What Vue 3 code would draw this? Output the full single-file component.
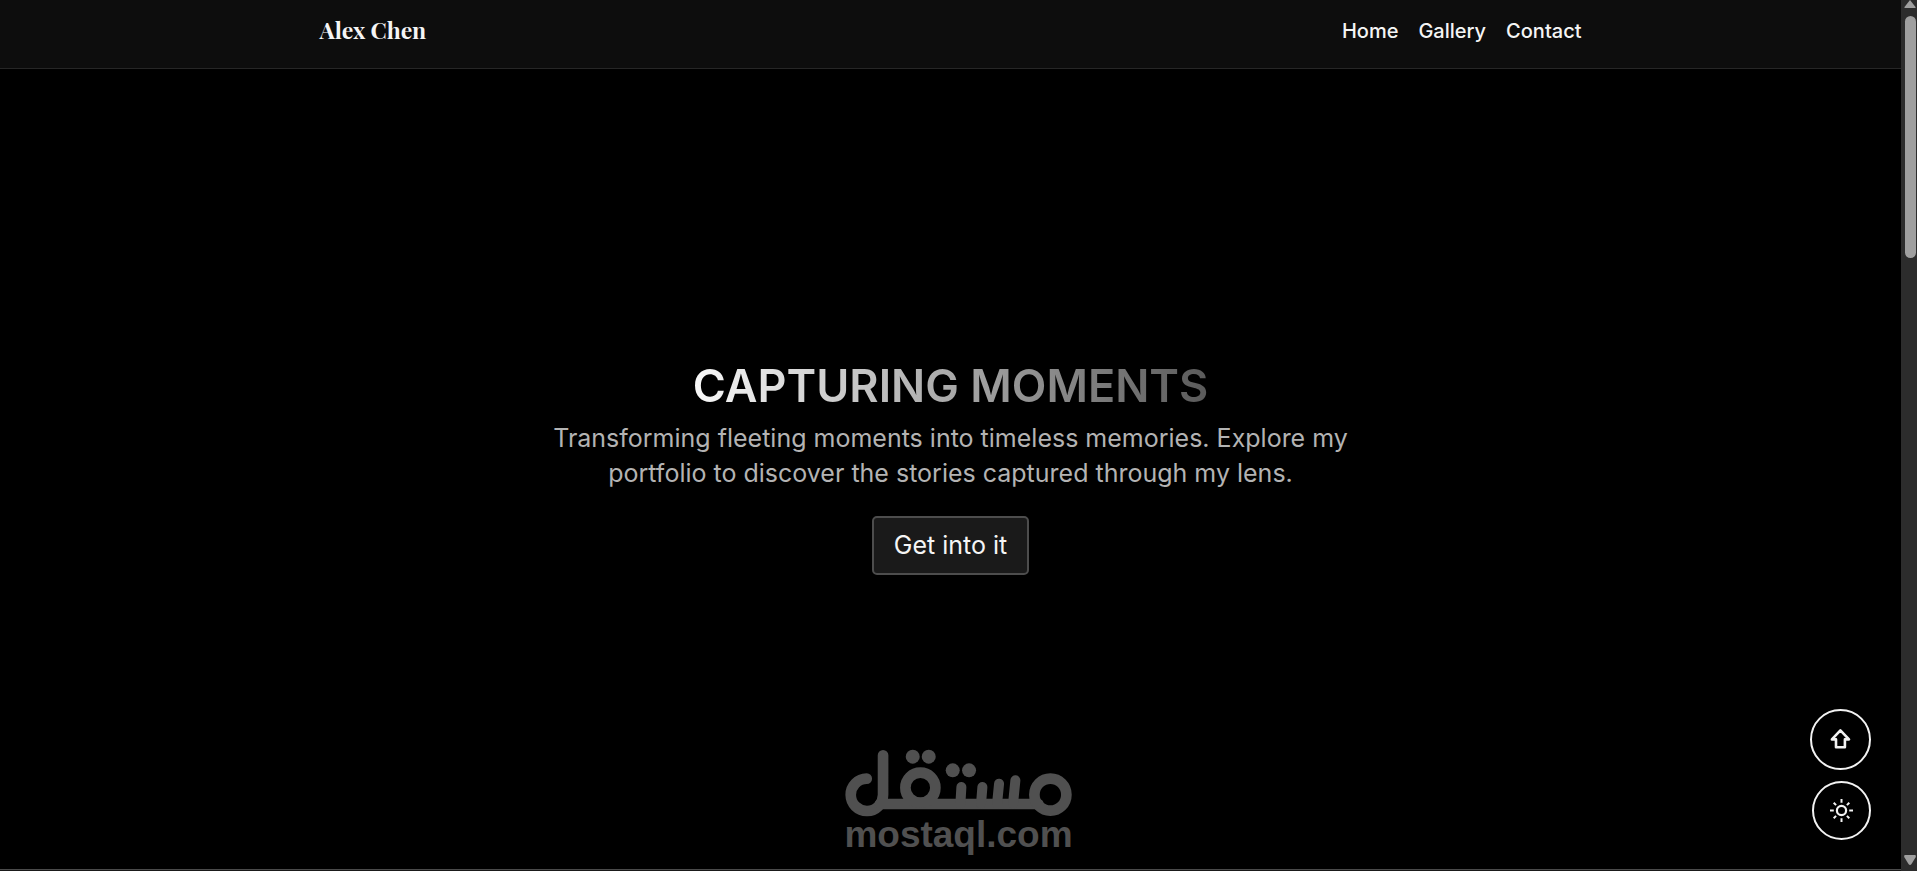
<script setup>
const links = [
  { label: 'Home', href: '#home' },
  { label: 'Gallery', href: '#gallery' },
  { label: 'Contact', href: '#contact' },
]
</script>

<template>
  <div class="window">
    <div class="page">
      <header class="header">
        <div class="container">
          <a class="brand" href="#home">Alex Chen</a>
          <nav class="nav">
            <a v-for="link in links" :key="link.label" :href="link.href">{{ link.label }}</a>
          </nav>
        </div>
      </header>

      <main id="home" class="hero">
        <h1>CAPTURING MOMENTS</h1>
        <p>Transforming fleeting moments into timeless memories. Explore my portfolio to discover the stories captured through my lens.</p>
        <button class="cta" type="button">Get into it</button>
      </main>

      <div class="next-section"></div>

      <div class="floating">
        <button class="round round-top" type="button" aria-label="Back to top">
          <svg width="20" height="20" viewBox="0 0 20 20" fill="none" stroke="#f2f2f2" stroke-width="2.6" stroke-linejoin="round">
            <path d="M9.4 1.4 L18 10.4 H13.9 V18.2 H5 V10.4 H.9 Z" />
          </svg>
        </button>
        <button class="round" type="button" aria-label="Toggle theme">
          <svg width="24" height="24" viewBox="0 0 24 24" fill="none" stroke="#f2f2f2" stroke-width="2.2">
            <circle cx="11.5" cy="11.5" r="4.6" />
            <path stroke-width="2" d="M11.5 0V3.8M11.5 19.2V23M0 11.5H3.8M19.2 11.5H23M3.7 3.7L6.1 6.1M16.9 16.9L19.3 19.3M19.3 3.7L16.9 6.1M6.1 16.9L3.7 19.3" />
          </svg>
        </button>
      </div>
    </div>

    <div class="scrollbar" aria-hidden="true">
      <svg width="12" height="8" viewBox="0 0 12 8"><path d="M6 0L11.5 7Q12 8 11 8H1Q0 8 .5 7Z" fill="#9f9f9f" /></svg>
      <div class="thumb"></div>
      <svg class="down" width="12" height="10" viewBox="0 0 12 10"><path d="M1 0H11Q12 0 11.8 2L7.5 9Q6 11 4.5 9L.2 2Q0 0 1 0Z" fill="#9f9f9f" /></svg>
    </div>

    <div class="watermark">
      <svg width="227" height="68" viewBox="45 26 680 204" role="img" aria-label="مستقل" fill="none" stroke="#505050" stroke-width="32" stroke-linecap="round" stroke-linejoin="round">
        <path d="M110 115 A48.5 48.5 0 1 0 159 163 V45" />
        <path d="M150 191 H625" />
        <circle cx="271" cy="142" r="45" />
        <circle cx="661" cy="163" r="48" />
        <path d="M391 190 L394 140M453 190 L457 140M501 190 L507 130M549 190 L556 120" stroke-width="30" />
        <g fill="#505050" stroke="none">
          <circle cx="248" cy="49" r="21" />
          <circle cx="296" cy="49" r="21" />
          <circle cx="368" cy="90" r="21" />
          <circle cx="417" cy="90" r="21" />
        </g>
      </svg>
      <span>mostaql.com</span>
    </div>
  </div>
</template>

<style>
body {
  margin: 0;
  background: #000;
}
</style>

<style scoped>
.window {
  position: relative;
  display: flex;
  height: 100vh;
  overflow: hidden;
  background: #000;
  color: #f5f5f5;
  font-family: Inter, "Liberation Sans", sans-serif;
}
.page {
  position: relative;
  flex: 1;
  display: flex;
  flex-direction: column;
}
.header {
  background: #0d0d0d;
  border-bottom: 1px solid #262626;
}
.container {
  box-sizing: border-box;
  max-width: 1262px;
  margin: 0 auto;
  padding: 16px 0 22px;
  display: flex;
  align-items: flex-start;
  justify-content: space-between;
  line-height: 30px;
}
a {
  color: inherit;
  text-decoration: none;
}
.brand {
  font-family: "Playfair Display", "Liberation Serif", serif;
  font-size: 23px;
  line-height: 28px;
  font-weight: 700;
}
.nav {
  display: flex;
  gap: 20px;
  font-size: 20px;
  font-weight: 500;
}
.hero {
  flex: 1;
  display: flex;
  flex-direction: column;
  align-items: center;
  justify-content: center;
  padding-bottom: 10px;
  text-align: center;
}
h1 {
  margin: 0 0 2px;
  font-size: 45px;
  line-height: 66px;
  font-weight: 600;
  color: transparent;
  background: linear-gradient(90deg, #f8f8f8, #5a5a5a);
  background-clip: text;
  -webkit-background-clip: text;
}
p {
  max-width: 820px;
  margin: 0 0 25px;
  font-size: 25px;
  line-height: 35px;
  color: #b3b3b3;
}
.cta {
  padding: 10px 20px;
  border: 2px solid #4d4d4d;
  border-radius: 5px;
  background: #1a1a1a;
  color: #f5f5f5;
  font: 400 25px/35px Inter, "Liberation Sans", sans-serif;
}
.next-section {
  height: 1px;
  border-top: 1px solid #4a4a4a;
  background: #1a1a1a;
}
.floating {
  position: absolute;
  right: 30px;
  bottom: 31px;
  display: flex;
  flex-direction: column;
  align-items: flex-end;
  gap: 11px;
}
.round {
  box-sizing: border-box;
  width: 59px;
  height: 59px;
  padding: 0;
  border: 2px solid #f2f2f2;
  border-radius: 50%;
  background: #000;
  display: flex;
  align-items: center;
  justify-content: center;
}
.round-top {
  width: 61px;
  height: 61px;
}
.round-top svg {
  margin-bottom: 2px;
  overflow: visible;
}
.scrollbar {
  box-sizing: border-box;
  width: 16px;
  padding-left: 2px;
  display: flex;
  flex-direction: column;
  align-items: center;
  background: #2c2c2c;
}
.scrollbar svg {
  flex: none;
}
.thumb {
  width: 11px;
  height: 242px;
  margin-top: 8px;
  border-radius: 6px;
  background: #9f9f9f;
}
.down {
  margin-top: auto;
  margin-bottom: 6px;
}
.watermark {
  position: absolute;
  left: 50%;
  bottom: 18px;
  transform: translateX(-50%);
  display: flex;
  flex-direction: column;
  align-items: center;
  color: #505050;
}
.watermark span {
  font: 700 37px/36px "Liberation Sans", Arial, sans-serif;
}
</style>
